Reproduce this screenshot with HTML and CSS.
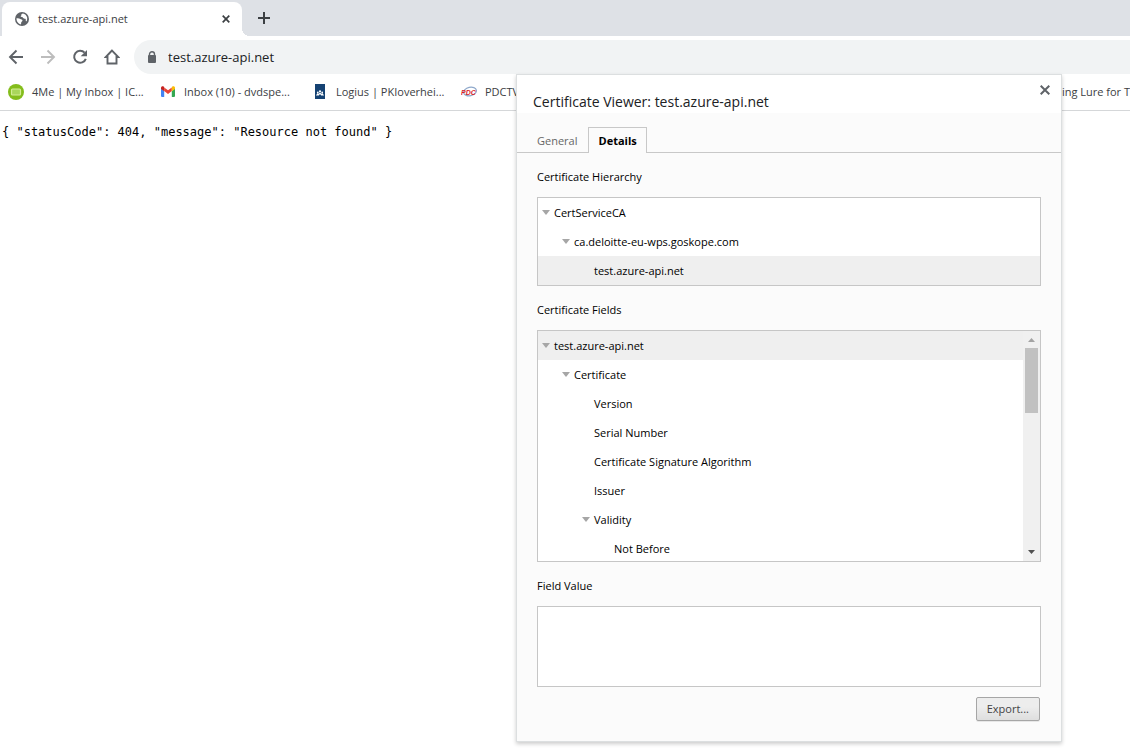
FILE: index.html
```html
<!DOCTYPE html>
<html lang="en">
<head>
<meta charset="utf-8">
<title>test.azure-api.net</title>
<link rel="stylesheet" href="styles.css">
</head>
<body>
<header class="browser">
  <div class="tabstrip">
    <div class="tab">
      <svg class="globe" viewBox="0 0 14 14" aria-hidden="true"><circle cx="7" cy="7" r="7" fill="#5f6368"/><path fill="#fff" d="M1.500 6.300c1.500-.3 3 0 3.800.8.700.7 2 .4 2.200 1.400.1 1-1.200 1.100-1.300 2.100l-.2 1.800C3.300 12 1.400 9.500 1.500 6.300zM8 1.600c-1 .1-1.800.6-1.600 1.300.2.600-1 .9-.7 1.700.3.700 1.600.3 2.100.9.500.7 1 1.300 2 1.200.8-.1 1.100.6 1 1.300-.2.900.2 1.400.8 1.200C13.300 6 11.500 2.400 8 1.600z"/></svg>
      <span class="tab-title">test.azure-api.net</span>
      <button class="icon-button tab-close" aria-label="Close tab"><svg width="8" height="8" viewBox="0 0 8 8"><path d="M.7.7l6.600 6.600M7.300.7L.7 7.300" stroke="#3c4043" stroke-width="1.700"/></svg></button>
    </div>
    <button class="icon-button new-tab" aria-label="New tab"><svg width="12" height="12" viewBox="0 0 12 12"><path d="M6 0v12M0 6h12" stroke="#3c4043" stroke-width="2"/></svg></button>
  </div>
  <nav class="toolbar" aria-label="Navigation">
    <button class="icon-button" aria-label="Back"><svg width="16" height="16" viewBox="0 0 16 16"><path d="M15 8H2.500M8.500 1.500L2 8l6.500 6.500" fill="none" stroke="#5f6368" stroke-width="1.900"/></svg></button>
    <button class="icon-button" aria-label="Forward" disabled><svg width="16" height="16" viewBox="0 0 16 16"><path d="M1 8h12.500M7.500 1.500L14 8l-6.500 6.500" fill="none" stroke="#bdbdbd" stroke-width="1.900"/></svg></button>
    <button class="icon-button" aria-label="Reload"><svg width="16" height="16" viewBox="0 0 16 16"><path d="M12.600 3.700A6 6 0 1 0 13.800 9.800" fill="none" stroke="#5f6368" stroke-width="2"/><path d="M15 1v6.300H8.700z" fill="#5f6368"/></svg></button>
    <button class="icon-button" aria-label="Home"><svg width="16" height="16" viewBox="0 0 16 16"><path d="M8 1.500L1.700 8H3.500v6.500h9V8h1.800z" fill="none" stroke="#5f6368" stroke-width="1.900"/></svg></button>
    <div class="omnibox">
      <svg width="10" height="13" viewBox="0 0 10 13" aria-hidden="true"><path d="M2.500 5V3.300a2.500 2.500 0 0 1 5 0V5" fill="none" stroke="#5f6368" stroke-width="1.400"/><rect x="1" y="4" width="8" height="8" rx="1" fill="#5f6368"/></svg>
      <input class="address" type="text" aria-label="Address" value="test.azure-api.net">
    </div>
  </nav>
  <nav class="bookmarks" aria-label="Bookmarks">
    <a class="bookmark" href="#"><svg width="16" height="16" viewBox="0 0 16 16"><circle cx="8" cy="8" r="8" fill="#84bd1c"/><rect x="3.500" y="5" width="9" height="6" rx="1" fill="#a9d65b" stroke="#d3ee94" stroke-width="1.200"/></svg><span>4Me | My Inbox | IC...</span></a>
    <a class="bookmark" href="#"><svg width="16" height="16" viewBox="0 0 16 16"><path fill="#4285f4" d="M1 4.500l3.200 2.400V13H2.100A1.100 1.100 0 0 1 1 11.900z"/><path fill="#34a853" d="M15 4.500l-3.200 2.400V13h2.100a1.100 1.100 0 0 0 1.100-1.100z"/><path fill="#ea4335" d="M4.200 3.400L8 6.300l3.800-2.900v3.700L8 10 4.200 7.100z"/><path fill="#c5221f" d="M1 4.700v-1C1 2.300 2.600 1.700 3.600 2.500l.6.500v4.300L1 5z"/><path fill="#fbbc04" d="M15 4.700v-1c0-1.400-1.600-2-2.600-1.200l-.6.500v4.300L15 5z"/></svg><span>Inbox (10) - dvdspe...</span></a>
    <a class="bookmark compact" href="#"><svg width="16" height="16" viewBox="0 0 16 16"><path fill="#154273" d="M3 0h10v15H3z"/><g fill="#fff"><circle cx="8" cy="7.300" r="1.100"/><circle cx="5.800" cy="8.500" r=".9"/><circle cx="10.200" cy="8.500" r=".9"/><path d="M4 11.500l1.300-2.200 1.200.4L8 8.500l1.500 1.200 1.200-.4 1.300 2.200H9.200L8 10l-1.200 1.500z"/></g></svg><span>Logius | PKIoverhei...</span></a>
    <a class="bookmark" href="#"><svg width="16" height="16" viewBox="0 0 16 16" aria-hidden="true"><ellipse cx="9" cy="7.500" rx="6.500" ry="4.200" fill="none" stroke="#8fa9cb" stroke-width="1.200" transform="rotate(-12 9 7.500)"/><text x="0" y="10.500" class="logo-text">PDC</text></svg><span>PDCTV</span></a>
    <a class="bookmark bookmark-last" href="#">ing Lure for T</a>
  </nav>
</header>
<main>
  <pre class="response">{ "statusCode": 404, "message": "Resource not found" }</pre>
</main>

<section class="dialog" role="dialog" aria-labelledby="dialog-title">
  <header class="dialog-header">
    <h1 id="dialog-title">Certificate Viewer: test.azure-api.net</h1>
    <button class="icon-button dialog-close" aria-label="Close"><svg width="10" height="10" viewBox="0 0 10 10"><path d="M.7.7l8.600 8.600M9.300.7L.7 9.300" stroke="#5f6368" stroke-width="2"/></svg></button>
  </header>
  <div class="dialog-tabs" role="tablist">
    <button class="dialog-tab" role="tab" aria-selected="false">General</button>
    <button class="dialog-tab selected" role="tab" aria-selected="true">Details</button>
  </div>
  <div class="panel" role="tabpanel">
    <h2 class="label">Certificate Hierarchy</h2>
    <ul class="tree">
      <li class="row"><i class="arrow"></i>CertServiceCA</li>
      <li class="row level-1"><i class="arrow"></i>ca.deloitte-eu-wps.goskope.com</li>
      <li class="row level-2 current"><i></i>test.azure-api.net</li>
    </ul>
    <h2 class="label">Certificate Fields</h2>
    <div class="fields">
      <ul class="field-list">
        <li class="row current"><i class="arrow"></i>test.azure-api.net</li>
        <li class="row level-1"><i class="arrow"></i>Certificate</li>
        <li class="row level-2"><i></i>Version</li>
        <li class="row level-2"><i></i>Serial Number</li>
        <li class="row level-2"><i></i>Certificate Signature Algorithm</li>
        <li class="row level-2"><i></i>Issuer</li>
        <li class="row level-2"><i class="arrow"></i>Validity</li>
        <li class="row level-3"><i></i>Not Before</li>
      </ul>
      <div class="scrollbar" aria-hidden="true">
        <svg width="17" height="17" viewBox="0 0 17 17"><path d="M5 11h7L8.500 7z" fill="#a3a3a3"/></svg>
        <div class="thumb"></div>
        <svg width="17" height="17" viewBox="0 0 17 17"><path d="M5 6h7l-3.500 4z" fill="#505050"/></svg>
      </div>
    </div>
    <label class="label" for="field-value">Field Value</label>
    <textarea id="field-value" class="field-value" readonly></textarea>
    <button class="export">Export...</button>
  </div>
</section>
</body>
</html>
```
FILE: styles.css
```css
* {
  box-sizing: border-box;
}

body {
  position: relative;
  min-height: 100vh;
  margin: 0;
  overflow: hidden;
  background: #fff;
  color: #000;
  font-family: "Open Sans", "Noto Sans", sans-serif;
  font-size: 11px;
  line-height: 16px;
}

button,
input,
textarea {
  font: inherit;
}

svg {
  display: block;
  flex: none;
}

.icon-button {
  display: flex;
  align-items: center;
  justify-content: center;
  flex: none;
  width: 16px;
  height: 16px;
  padding: 0;
  border: 0;
  background: none;
}

/* Browser frame */

.tabstrip {
  display: flex;
  align-items: center;
  gap: 14px;
  height: 36px;
  padding-left: 2px;
  background: #dee1e6;
}

.tab {
  position: relative;
  display: flex;
  align-items: center;
  align-self: flex-end;
  gap: 9px;
  width: 240px;
  height: 34px;
  padding: 0 8px 0 13px;
  border-radius: 8px 8px 0 0;
  background: #fff;
  color: #3c4043;
}

.tab::after {
  content: "";
  position: absolute;
  bottom: 0;
  left: 100%;
  width: 8px;
  height: 8px;
  background: radial-gradient(circle at 100% 0, transparent 8px, #fff 8px);
}

.globe {
  width: 14px;
  height: 14px;
}

.tab-title {
  flex: 1;
}

.toolbar {
  display: flex;
  align-items: center;
  gap: 16px;
  height: 38px;
  padding: 4px 0 0 8px;
}

.omnibox {
  display: flex;
  flex: 1;
  align-items: center;
  gap: 11px;
  height: 34px;
  margin-left: -2px;
  padding-left: 13px;
  border-radius: 17px 0 0 17px;
  background: #f1f3f4;
}

.address {
  flex: 1;
  min-width: 0;
  padding: 0;
  border: 0;
  outline: 0;
  background: none;
  color: #202124;
  font-size: 13px;
}

.bookmarks {
  display: flex;
  align-items: center;
  height: 37px;
  padding-left: 8px;
  border-bottom: 1px solid #d5d7d9;
}

.bookmark {
  display: flex;
  flex: none;
  align-items: center;
  gap: 8px;
  width: 152px;
  color: #3c4043;
  text-decoration: none;
  white-space: nowrap;
}

.compact {
  width: 149px;
}

.bookmark-last {
  width: auto;
  margin-left: auto;
}

.logo-text {
  fill: #d91f2b;
  font-family: "Liberation Sans", sans-serif;
  font-size: 7px;
  font-style: italic;
  font-weight: 700;
}

.response {
  margin: 13px 2px;
  font-family: "DejaVu Sans Mono", monospace;
  font-size: 12px;
  line-height: 16px;
}

/* Certificate viewer */

.dialog {
  position: absolute;
  top: 74px;
  right: 68px;
  width: 546px;
  max-width: calc(100% - 68px);
  border: 1px solid #dcdfe0;
  background: #fbfbfb;
  box-shadow: 0 2px 4px rgba(0, 0, 0, 0.2);
}

.dialog-header {
  display: flex;
  align-items: flex-start;
  justify-content: space-between;
  height: 38px;
  padding: 7px 8px 0 16px;
  background: #fff;
}

.dialog-header h1 {
  margin: 0;
  padding-top: 10px;
  color: #202124;
  font-size: 14px;
  font-weight: 400;
  line-height: 20px;
}

.dialog-tabs {
  display: flex;
  gap: 1px;
  padding: 14px 0 0 10px;
  background: linear-gradient(#c8c8c8, #c8c8c8) bottom / 100% 1px no-repeat;
}

.dialog-tab {
  height: 26px;
  padding: 0 9px;
  border: 1px solid transparent;
  border-bottom: 0;
  background: none;
  color: #666;
}

.dialog-tab.selected {
  border-color: #c8c8c8;
  background: #fbfbfb;
  color: #000;
  font-weight: 700;
}

.panel {
  display: flex;
  flex-direction: column;
  padding: 16px 20px 20px;
}

.label {
  margin: 0 0 12px;
  font-size: 11px;
  font-weight: 400;
  line-height: 16px;
}

.tree,
.field-list {
  margin: 0;
  padding: 0;
  list-style: none;
}

.tree,
.fields,
.field-value {
  border: 1px solid #c6c6c6;
  background: #fff;
}

.tree,
.fields {
  margin-bottom: 16px;
}

.fields {
  display: flex;
  height: 232px;
}

.field-list {
  flex: 1;
  overflow-y: auto;
  scrollbar-width: none;
}

.row {
  display: flex;
  align-items: center;
  height: 29px;
  padding-left: 4px;
}

.row i {
  flex: none;
  width: 12px;
}

.arrow::before {
  content: "";
  display: block;
  width: 8px;
  height: 5px;
  background: #a6a6a6;
  clip-path: polygon(0 0, 100% 0, 50% 100%);
}

.level-1 {
  padding-left: 24px;
}

.level-2 {
  padding-left: 44px;
}

.level-3 {
  padding-left: 64px;
}

.current {
  background: #efefef;
}

.scrollbar {
  display: flex;
  flex-direction: column;
  justify-content: space-between;
  width: 17px;
  background: #f0f0f0;
}

.thumb {
  height: 65px;
  margin: 0 2px auto;
  background: #c1c1c1;
}

.field-value {
  display: block;
  width: 100%;
  height: 81px;
  resize: none;
}

.export {
  align-self: flex-end;
  height: 24px;
  margin: 10px 1px 0 0;
  padding: 0 10px;
  border: 1px solid #a6a6a6;
  border-radius: 2px;
  background: linear-gradient(#ededed 38%, #dedede);
  box-shadow: 0 1px 0 rgba(0, 0, 0, 0.08);
  color: #444;
}
```
